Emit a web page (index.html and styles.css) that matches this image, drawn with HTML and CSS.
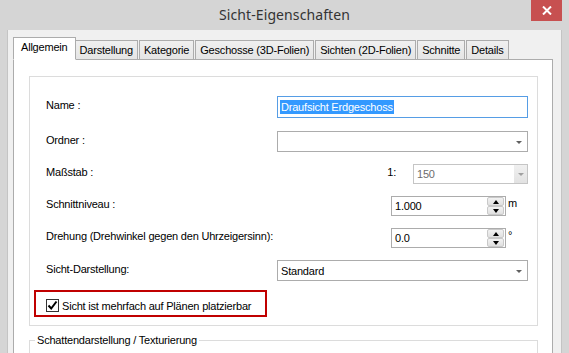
FILE: index.html
```html
<!DOCTYPE html>
<html lang="de">
<head>
    <meta charset="UTF-8">
    <title>Sicht-Eigenschaften</title>
    <link rel="stylesheet" href="styles.css">
</head>
<body>
<div class="window">

    <div class="titlebar">
        <span></span>
        <div class="title">Sicht-Eigenschaften</div>
        <div class="close">
            <svg width="10" height="9" viewBox="0 0 10 9">
                <path d="M1 0.5 L9 8.5 M9 0.5 L1 8.5" stroke="#fff" stroke-width="2"/>
            </svg>
        </div>
    </div>

    <div class="client">
        <div class="tabs">
            <div class="tab active">Allgemein</div>
            <div class="tab">Darstellung</div>
            <div class="tab">Kategorie</div>
            <div class="tab">Geschosse (3D-Folien)</div>
            <div class="tab">Sichten (2D-Folien)</div>
            <div class="tab">Schnitte</div>
            <div class="tab">Details</div>
        </div>

        <div class="panel">
            <div class="group">

                <div class="row row-name">
                    <div class="label">Name :</div>
                    <div class="ctl">
                        <div class="textbox focused"><span class="selected">Draufsicht Erdgeschoss</span></div>
                    </div>
                </div>

                <div class="row row-combo">
                    <div class="label">Ordner :</div>
                    <div class="ctl">
                        <div class="combo">
                            <span class="combo-text"></span>
                            <span class="arrow"></span>
                        </div>
                    </div>
                </div>

                <div class="row">
                    <div class="label">Maßstab :</div>
                    <div class="ctl ctl-end">
                        <span class="prefix">1:</span>
                        <div class="combo combo-small disabled">
                            <span class="combo-text">150</span>
                            <span class="dropbtn"><span class="arrow"></span></span>
                        </div>
                    </div>
                </div>

                <div class="row">
                    <div class="label">Schnittniveau :</div>
                    <div class="ctl ctl-spin">
                        <div class="spinner">
                            <span class="spin-value">1.000</span>
                            <span class="spin-btns">
                                <span class="spin-btn"><span class="up"></span></span>
                                <span class="spin-btn"><span class="down"></span></span>
                            </span>
                        </div>
                        <span class="unit">m</span>
                    </div>
                </div>

                <div class="row">
                    <div class="label">Drehung (Drehwinkel gegen den Uhrzeigersinn):</div>
                    <div class="ctl ctl-spin">
                        <div class="spinner">
                            <span class="spin-value">0.0</span>
                            <span class="spin-btns">
                                <span class="spin-btn"><span class="up"></span></span>
                                <span class="spin-btn"><span class="down"></span></span>
                            </span>
                        </div>
                        <span class="unit">°</span>
                    </div>
                </div>

                <div class="row row-combo">
                    <div class="label">Sicht-Darstellung:</div>
                    <div class="ctl">
                        <div class="combo">
                            <span class="combo-text">Standard</span>
                            <span class="arrow"></span>
                        </div>
                    </div>
                </div>

                <div class="highlight">
                    <span class="checkbox">
                        <svg width="11" height="11" viewBox="0 0 11 11">
                            <path d="M1.5 5.5 L4.2 8.5 L9.5 1.5" fill="none" stroke="#000" stroke-width="2"/>
                        </svg>
                    </span>
                    <span>Sicht ist mehrfach auf Plänen platzierbar</span>
                </div>

            </div>

            <fieldset class="group2">
                <legend>Schattendarstellung / Texturierung</legend>
            </fieldset>
        </div>
    </div>

</div>
</body>
</html>
```

FILE: styles.css
```css
/* General Reset */
body {
    margin: 0;
    padding: 0;
    background: #d5d5d5;
}

.window {
    width: 569px;
    height: 353px;
    overflow: hidden;
    display: flex;
    flex-direction: column;
    background: #d5d5d5;
    font-family: "Liberation Sans", Arial, sans-serif;
    font-size: 11px;
    letter-spacing: -0.2px;
    color: #000;
}

/* Title bar */
.titlebar {
    height: 30px;
    flex: 0 0 30px;
    display: grid;
    grid-template-columns: 1fr auto 1fr;
    padding-right: 7px;
}

.title {
    font-family: "Noto Sans", sans-serif;
    font-size: 14px;
    letter-spacing: 0.1px;
    color: #333;
    line-height: 30px;
    padding-left: 7px;
}

.close {
    justify-self: end;
    width: 31px;
    height: 21px;
    background: #c75050;
    display: flex;
    align-items: center;
    justify-content: center;
}

/* Client area */
.client {
    flex: 1;
    margin: 0 7px 0 7px;
    border-left: 1px solid #c4c4c4;
    border-right: 1px solid #c4c4c4;
    background: #f0f0f0;
    padding: 9px 8px 0 5px;
    display: flex;
    flex-direction: column;
}

/* Tabs */
.tabs {
    display: flex;
    align-items: flex-end;
    height: 21px;
    padding-left: 2px;
    position: relative;
    z-index: 1;
    margin-bottom: -1px;
}

.tab {
    height: 18px;
    line-height: 19px;
    padding: 0 4px;
    border: 1px solid #acacac;
    margin-right: 1px;
    background: linear-gradient(#f0f0f0, #e5e5e5);
    white-space: nowrap;
}

.tab.active {
    height: 21px;
    line-height: 18px;
    margin: 0 -1px 0 -2px;
    padding: 0 7px;
    background: #fff;
    border-bottom-color: #fff;
    position: relative;
    z-index: 2;
}

.panel {
    flex: 1;
    background: #fff;
    border: 1px solid #acacac;
    border-bottom: none;
    padding: 16px 14px 0 15px;
}

/* First group */
.group {
    border: 1px solid #dcdcdc;
    padding: 19px 9px 8px 16px;
}

.row {
    display: flex;
    align-items: center;
    height: 20px;
    margin-bottom: 12px;
}

.row-name {
    height: 22px;
    margin-bottom: 13px;
}

.row-combo {
    height: 21px;
}

.label {
    flex: 1;
    padding-bottom: 4px;
    white-space: nowrap;
}

.ctl {
    width: 251px;
    height: 100%;
    display: flex;
    align-items: center;
}

.ctl-end {
    justify-content: flex-end;
}

.ctl-spin {
    padding-left: 114px;
    box-sizing: border-box;
    align-items: flex-start;
}

.textbox {
    width: 100%;
    height: 100%;
    box-sizing: border-box;
    border: 1px solid #acacac;
    padding: 2px 2px;
    display: flex;
    align-items: center;
}

.textbox.focused {
    border-color: #569de5;
}

.selected {
    background: #3399ff;
    color: #fff;
    line-height: 14px;
    padding: 0 1px;
}

.combo {
    width: 100%;
    height: 100%;
    box-sizing: border-box;
    border: 1px solid #acacac;
    background: #fff;
    display: flex;
    align-items: center;
    padding-left: 3px;
}

.combo-text {
    flex: 1;
}

.arrow {
    width: 0;
    height: 0;
    border-left: 3px solid transparent;
    border-right: 3px solid transparent;
    border-top: 3px solid #606060;
    margin-right: 5px;
    margin-top: 1px;
}

.combo-small {
    width: 115px;
}

.combo.disabled {
    color: #6d6d6d;
    border-color: #c5c5c5;
}

.dropbtn {
    align-self: stretch;
    width: 13px;
    background: linear-gradient(#f0f0f0, #e2e2e2);
    display: flex;
    align-items: center;
    justify-content: center;
}

.dropbtn .arrow {
    margin: 1px 0 0 0;
    border-top-color: #a0a0a0;
}

.prefix {
    margin-right: 17px;
    padding-bottom: 4px;
}

/* Spinner */
.spinner {
    width: 115px;
    height: 20px;
    box-sizing: border-box;
    border: 1px solid #acacac;
    display: flex;
    align-items: center;
    padding: 0 1px 0 3px;
}

.spin-value {
    flex: 1;
}

.spin-btns {
    display: flex;
    flex-direction: column;
    width: 17px;
    height: 18px;
}

.spin-btn {
    flex: 1;
    border: 1px solid #c9c9c9;
    border-radius: 2px;
    background: linear-gradient(#f2f2f2, #e0e0e0);
    display: flex;
    align-items: center;
    justify-content: center;
}

.up {
    width: 0;
    height: 0;
    border-left: 3px solid transparent;
    border-right: 3px solid transparent;
    border-bottom: 4px solid #000;
}

.down {
    width: 0;
    height: 0;
    border-left: 3px solid transparent;
    border-right: 3px solid transparent;
    border-top: 4px solid #000;
}

.unit {
    margin-left: 2px;
    line-height: 14px;
}

/* Highlighted checkbox */
.highlight {
    margin: -3px 0 0 -12px;
    width: 233px;
    height: 27px;
    box-sizing: border-box;
    border: 2px solid #c00000;
    padding: 4px 0 0 10px;
    display: flex;
    align-items: center;
    gap: 3px;
}

.checkbox {
    width: 13px;
    height: 13px;
    box-sizing: border-box;
    border: 1px solid #333;
    background: #fff;
    display: flex;
    align-items: center;
    justify-content: center;
}

/* Second group */
.group2 {
    margin: 8px 0 0 0;
    padding: 0 0 0 5px;
    border: 1px solid #dcdcdc;
    min-height: 40px;
}

.group2 legend {
    padding: 0 2px;
    line-height: 13px;
}
```
